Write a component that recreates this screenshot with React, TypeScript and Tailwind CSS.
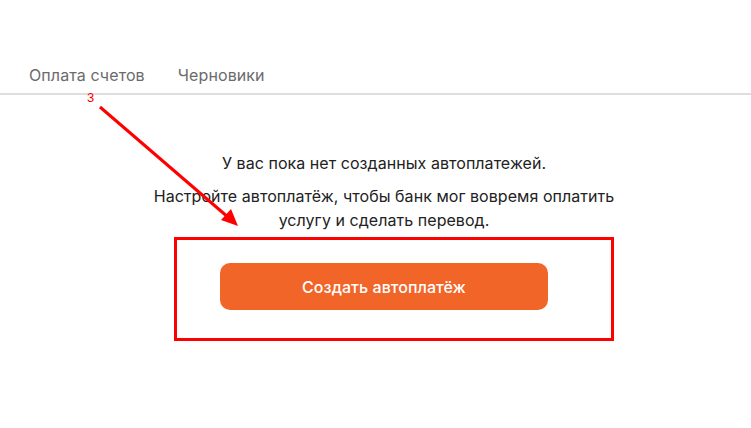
import React from "react";

const tabs = ["Оплата счетов", "Черновики"];

export default function App() {
  return (
    <div className="relative min-h-[428px] w-full bg-white font-['Inter','Noto_Sans',sans-serif]">
      {/* Tabs */}
      <div className="flex gap-[33px] px-[29px] pt-[65px] pb-[8px] text-[16px] leading-5 tracking-[0.1px] text-[#6b6b6b]">
        {tabs.map((t) => (
          <span key={t}>{t}</span>
        ))}
      </div>
      <div className="h-[2px] bg-[#dedede]" />

      {/* Empty state */}
      <div className="flex flex-col items-center pl-[17px] text-center text-[16px] leading-6 tracking-[0.05px] text-[#222]">
        <p className="mt-[56px]">У вас пока нет созданных автоплатежей.</p>
        <p className="mt-[9px] w-[500px]">
          Настройте автоплатёж, чтобы банк мог вовремя оплатить услугу и сделать перевод.
        </p>
        <button className="mt-[31px] h-[47px] w-[328px] rounded-[10px] bg-[#f26529] text-[16px] font-medium text-white">
          Создать автоплатёж
        </button>
      </div>

      {/* Annotation */}
      <div className="absolute left-[174px] top-[237px] h-[104px] w-[440px] border-[3px] border-[#ff0000]" />
      <span className="absolute left-[87px] top-[91px] font-['Liberation_Sans',sans-serif] text-[13px] leading-[14px] text-[#ff0000]">
        3
      </span>
      <svg className="absolute left-0 top-0" width="751" height="428" viewBox="0 0 751 428">
        <line x1="100" y1="107" x2="229" y2="218" stroke="#ff0000" strokeWidth="3" />
        <polygon points="238,226 221,220 231,209" fill="#ff0000" />
      </svg>
    </div>
  );
}
